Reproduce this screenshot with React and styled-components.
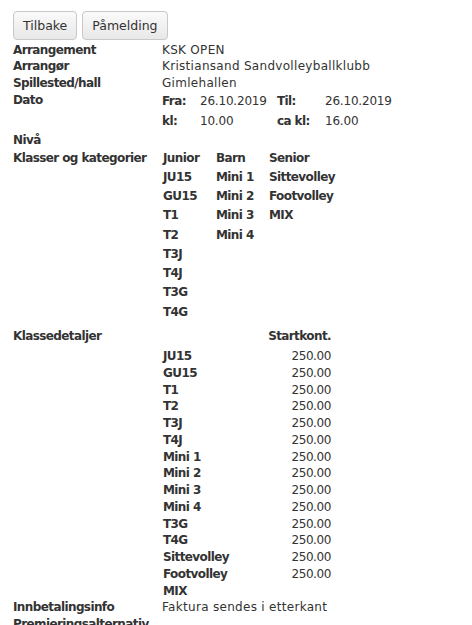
import styled, { createGlobalStyle } from 'styled-components'

const Global = createGlobalStyle`
body {
  margin: 0;
  background: #fff;
  font-family: "DejaVu Sans", Verdana, sans-serif;
  font-size: 12px;
  letter-spacing: 0.3px;
  color: #333;
}
`

const Page = styled.div`
padding: 11px 13px 0;
`

const Toolbar = styled.div`
display: flex;
gap: 5px;
margin-bottom: 1.6px;
`

const Button = styled.button`
height: 29px;
padding: 0 9px;
font-family: "DejaVu Sans", Verdana, sans-serif;
font-size: 12.5px;
letter-spacing: 0;
color: #333;
background: linear-gradient(#fafafa, #e8e8e8);
border: 1px solid #c8c8c8;
border-radius: 4px;
`

const Row = styled.div`
display: grid;
grid-template-columns: 149px 1fr;
line-height: 16.7px;
margin-top: ${p => p.gap || 0}px;
`

const Label = styled.div`
font-weight: bold;
letter-spacing: -0.6px;
padding-top: ${p => p.offset || 0}px;
`

const Value = styled.div``

const DateGrid = styled.div`
display: grid;
grid-template-columns: 38px 77px 48px auto;
grid-auto-rows: 20px;
align-items: center;
`

const Key = styled.span`
font-weight: bold;
letter-spacing: -0.6px;
`

const Num = styled.span`
letter-spacing: -0.2px;
`

const ClassGrid = styled.div`
display: grid;
grid-template-columns: 53px 53px auto;
grid-auto-rows: 19.25px;
align-items: center;
padding-left: 1px;
font-weight: bold;
letter-spacing: -0.6px;
`

const DetailGrid = styled.div`
display: grid;
grid-template-columns: 100px 68px;
grid-template-rows: 20.5px;
grid-auto-rows: 16.75px;
padding-left: 1px;
`

const DetailHead = styled.div`
grid-column: 2;
text-align: right;
font-weight: bold;
letter-spacing: -0.6px;
`

const Name = styled.div`
font-weight: bold;
letter-spacing: -0.6px;
`

const Price = styled.div`
text-align: right;
letter-spacing: -0.4px;
`

const junior = ['JU15', 'GU15', 'T1', 'T2', 'T3J', 'T4J', 'T3G', 'T4G']
const barn = ['Mini 1', 'Mini 2', 'Mini 3', 'Mini 4']
const senior = ['Sittevolley', 'Footvolley', 'MIX']

const details = [
  ['JU15', '250.00'], ['GU15', '250.00'], ['T1', '250.00'], ['T2', '250.00'],
  ['T3J', '250.00'], ['T4J', '250.00'], ['Mini 1', '250.00'], ['Mini 2', '250.00'],
  ['Mini 3', '250.00'], ['Mini 4', '250.00'], ['T3G', '250.00'], ['T4G', '250.00'],
  ['Sittevolley', '250.00'], ['Footvolley', '250.00'], ['MIX', '']
]

const App = () => {
  const classRows = [['Junior', 'Barn', 'Senior']]
  for (let i = 0; i < junior.length; i++) {
    classRows.push([junior[i], barn[i] || '', senior[i] || ''])
  }

  return (
    <Page>
      <Global />
      <Toolbar>
        <Button>Tilbake</Button>
        <Button>Påmelding</Button>
      </Toolbar>
      <Row><Label>Arrangement</Label><Value>KSK OPEN</Value></Row>
      <Row><Label>Arrangør</Label><Value>Kristiansand Sandvolleyballklubb</Value></Row>
      <Row><Label>Spillested/hall</Label><Value>Gimlehallen</Value></Row>
      <Row>
        <Label>Dato</Label>
        <DateGrid>
          <Key>Fra:</Key><Num>26.10.2019</Num><Key>Til:</Key><Num>26.10.2019</Num>
          <Key>kl:</Key><Num>10.00</Num><Key>ca kl:</Key><Num>16.00</Num>
        </DateGrid>
      </Row>
      <Row><Label>Nivå</Label><Value></Value></Row>
      <Row>
        <Label offset={1.5}>Klasser og kategorier</Label>
        <ClassGrid>
          {classRows.map((r, i) => r.map((c, j) => <span key={i + '-' + j}>{c}</span>))}
        </ClassGrid>
      </Row>
      <Row gap={6}>
        <Label>Klassedetaljer</Label>
        <DetailGrid>
          <DetailHead>Startkont.</DetailHead>
          {details.map(([n, p]) => [
            <Name key={n}>{n}</Name>,
            <Price key={n + 'p'}>{p}</Price>
          ])}
        </DetailGrid>
      </Row>
      <Row><Label>Innbetalingsinfo</Label><Value>Faktura sendes i etterkant</Value></Row>
      <Row><Label>Premieringsalternativ</Label><Value></Value></Row>
    </Page>
  )
}

export default App
